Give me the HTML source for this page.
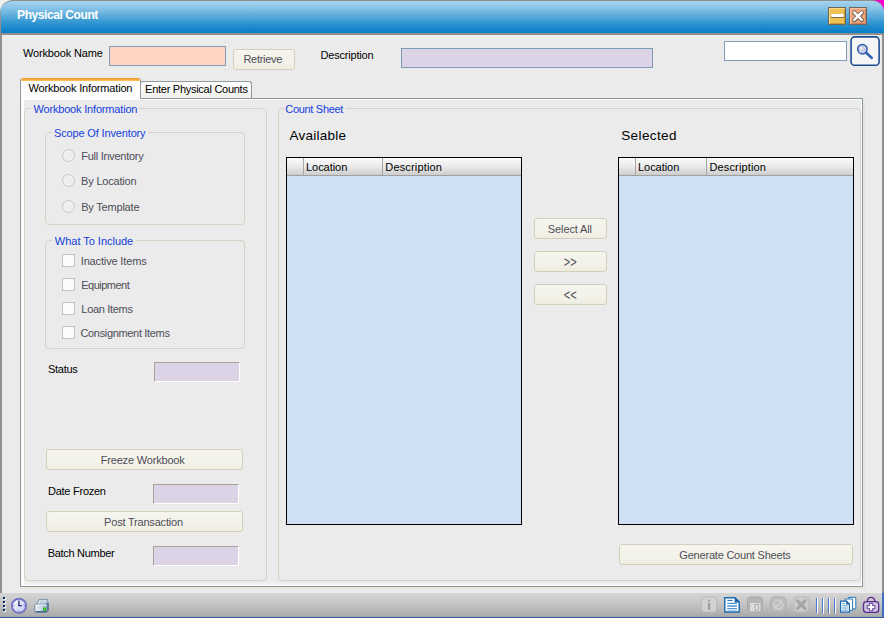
<!DOCTYPE html>
<html>
<head>
<meta charset="utf-8">
<title>Physical Count</title>
<style>
html,body{margin:0;padding:0;}
body{width:884px;height:618px;overflow:hidden;background:#ebebeb;font-family:"Liberation Sans",sans-serif;font-size:11px;color:#000;position:relative;}
.abs{position:absolute;}
#win{position:absolute;left:0;top:0;width:884px;height:618px;background:#ebebeb;overflow:hidden;}
#cornerL{position:absolute;left:0;top:0;width:16px;height:16px;background:#efefef;}
#cornerR{position:absolute;right:0;top:0;width:16px;height:16px;background:#ff00cc;}
#title{position:absolute;left:0;top:0;width:884px;height:33px;box-sizing:border-box;border-top:1px solid #8e8e8e;border-radius:13px 12px 0 0;background:linear-gradient(#a6d4ef 0%,#8bc5e7 20%,#5eaddb 45%,#3c9cd4 62%,#1f8bcc 80%,#067dc7 100%);}
#title span{position:absolute;left:16.6px;top:7px;color:#fff;font-weight:bold;font-size:12px;line-height:14px;white-space:nowrap;letter-spacing:-0.33px;}
#tline{position:absolute;left:0;top:33px;width:884px;height:2px;background:#8f8f8f;}
#lborder{position:absolute;left:0;top:33px;width:2px;height:561px;background:#8f8f8f;}
#lborder2{position:absolute;left:0;top:12px;width:1px;height:22px;background:linear-gradient(#8aa0b4,#8f8f8f 8px);}
#rborder{position:absolute;left:882px;top:33px;width:2px;height:561px;background:#8f8f8f;}
.lbl{position:absolute;white-space:nowrap;font-size:11px;line-height:13px;}
.blue{color:#1440dc;}
.white{color:#fff;}
.bold{font-weight:bold;}
.gray{color:#4d4d58;}
.inp{position:absolute;box-sizing:border-box;border:1px solid #7f9db9;}
.ro{position:absolute;box-sizing:border-box;background:#ddd3e6;border:1px solid;border-color:#a5a39a #fff #fff #a5a39a;}
.btn{position:absolute;box-sizing:border-box;border:1px solid #d2cfbd;border-radius:3px;background:linear-gradient(#f6f5ee,#f3f2e8 70%,#eeecdf);}
.grp{position:absolute;box-sizing:border-box;border:1px solid #d4d3c3;border-radius:4px;}
.gcut{position:absolute;height:3px;background:#ebebeb;}
.radio{position:absolute;width:11px;height:11px;border:1px solid #c9c6ba;border-radius:50%;background:#efefef;}
.chk{position:absolute;width:11px;height:11px;border:1px solid #c6c3b6;background:#fbfbfb;}
.grid{position:absolute;box-sizing:border-box;border:1px solid #000;background:#cfdff4;}
.ghead{position:absolute;left:0;top:0;right:0;height:17px;background:linear-gradient(#fbfbfb,#ececec 45%,#cdcdcd);border-bottom:1px solid #a0a0a0;}
.ghead i{position:absolute;top:0;width:1px;height:17px;background:#a7a7a7;}
</style>
</head>
<body>
<div id="win">
<div id="cornerL"></div><div id="cornerR"></div>
<div id="title"></div>
<div id="tline"></div>
<div id="lborder"></div><div id="lborder2"></div><div id="rborder"></div>

<!-- title buttons -->
<div class="abs" style="left:828px;top:7px;width:18px;height:18px;box-sizing:border-box;border:1px solid #6f6754;background:#f0c253;box-shadow:inset 1px 1px 0 #f8d98a,inset -1px -1px 0 #c79a36;"></div>
<div class="abs" style="left:831px;top:14px;width:13px;height:3px;background:#fff;border-radius:1.5px;box-shadow:0 1px 0 #7a6a4a;"></div>
<div class="abs" style="left:849px;top:7px;width:18px;height:18px;box-sizing:border-box;border:1px solid #6f6660;background:#eba57c;box-shadow:inset 1px 1px 0 #f5c3a4,inset -1px -1px 0 #c98259;"></div>
<svg class="abs" style="left:849px;top:7px" width="18" height="18" viewBox="0 0 18 18"><path d="M5.4 5.7 L12.8 13 M12.8 5.7 L5.4 13" stroke="#4c4038" stroke-opacity="0.85" stroke-width="4.1" stroke-linecap="round"/><path d="M5.3 5.5 L12.7 12.8 M12.7 5.5 L5.3 12.8" stroke="#fff" stroke-width="2.5" stroke-linecap="round"/></svg>

<!-- top row -->
<div class="inp" style="left:109px;top:46px;width:117px;height:20px;background:#ffd4c3;"></div>
<div class="btn" style="left:233px;top:49px;width:62px;height:21px;"></div>
<div class="inp" style="left:401px;top:48px;width:252px;height:20px;background:#ddd3e6;"></div>
<div class="inp" style="left:724px;top:41px;width:123px;height:20px;background:#fff;"></div>
<svg class="abs" style="left:850px;top:36px" width="30" height="30" viewBox="0 0 30 30"><rect x="1.1" y="0.9" width="28" height="28.4" rx="3.6" fill="#f6f6f6" stroke="#1d4e8f" stroke-width="1.6"/><circle cx="12.4" cy="13.2" r="4.7" fill="#c4cdec" stroke="#2a5ca6" stroke-width="1.5"/><circle cx="11.3" cy="12.4" r="1.3" fill="#fff"/><path d="M16.2 16.8 L21.6 21.8" stroke="#3463ac" stroke-width="2.7" stroke-linecap="round"/></svg>

<!-- tabs -->
<div class="abs" style="left:863px;top:100px;width:2px;height:489px;background:#e7e5d9;"></div>
<div class="abs" style="left:22px;top:587px;width:843px;height:2px;background:#e7e5d9;"></div>
<div class="abs" style="left:20px;top:98px;width:843px;height:489px;box-sizing:border-box;border:1px solid #8a979e;background:#fdfdfd;"></div>
<div class="abs" style="left:24px;top:100px;width:837px;height:485px;background:linear-gradient(#ebebeb 0,#ebebeb 482px,#f3f3f3 484px,#f3f3f3 100%);"></div>
<div class="abs" style="left:140px;top:81px;width:112px;height:17px;box-sizing:border-box;border:1px solid #919b9c;border-bottom:none;border-radius:3px 3px 0 0;background:linear-gradient(#fefefe,#f6f6f4 60%,#eeeeea);"></div>
<div class="abs" style="left:20px;top:78px;width:121px;height:21px;box-sizing:border-box;border:1px solid #919b9c;border-bottom:none;border-top:none;border-radius:3px 3px 0 0;background:#fdfdfd;overflow:hidden;"><div style="height:3px;background:linear-gradient(#f0941c,#fbc761);"></div></div>

<!-- left group -->
<div class="grp" style="left:24px;top:108px;width:243px;height:473px;"></div>
<div class="gcut" style="left:31px;top:107px;width:108px;"></div>
<div class="grp" style="left:45px;top:132px;width:200px;height:93px;"></div>
<div class="gcut" style="left:52px;top:131px;width:96px;"></div>
<div class="radio" style="left:62px;top:149px;"></div>
<div class="radio" style="left:62px;top:174px;"></div>
<div class="radio" style="left:62px;top:200px;"></div>

<div class="grp" style="left:45px;top:240px;width:200px;height:109px;"></div>
<div class="gcut" style="left:52px;top:239px;width:84px;"></div>
<div class="chk" style="left:62px;top:254px;"></div>
<div class="chk" style="left:62px;top:278px;"></div>
<div class="chk" style="left:62px;top:302px;"></div>
<div class="chk" style="left:62px;top:326px;"></div>

<div class="ro" style="left:154px;top:362px;width:86px;height:20px;"></div>
<div class="btn" style="left:46px;top:449px;width:197px;height:21px;"></div>
<div class="ro" style="left:153px;top:484px;width:86px;height:20px;"></div>
<div class="btn" style="left:46px;top:511px;width:197px;height:21px;"></div>
<div class="ro" style="left:153px;top:546px;width:86px;height:20px;"></div>

<!-- count sheet group -->
<div class="grp" style="left:278px;top:108px;width:583px;height:473px;"></div>
<div class="gcut" style="left:284px;top:107px;width:62px;"></div>

<div class="grid" style="left:286px;top:157px;width:236px;height:368px;">
 <div class="ghead"><i style="left:16px"></i><i style="left:95px"></i></div>
</div>
<div class="grid" style="left:618px;top:157px;width:236px;height:368px;">
 <div class="ghead"><i style="left:16px"></i><i style="left:87px"></i></div>
</div>

<div class="btn" style="left:534px;top:218px;width:73px;height:21px;"></div>
<div class="btn" style="left:534px;top:251px;width:73px;height:21px;"></div>
<div class="btn" style="left:534px;top:284px;width:73px;height:21px;"></div>
<div class="btn" style="left:619px;top:544px;width:234px;height:21px;"></div>

<div class="lbl bold white" style="left:17.10px;top:8px;letter-spacing:-0.42px;font-size:12px;line-height:14px;">Physical Count</div>
<div class="lbl" style="left:22.95px;top:47px;letter-spacing:-0.14px;">Workbook Name</div>
<div class="lbl" style="left:320.60px;top:49px;letter-spacing:-0.20px;">Description</div>
<div class="lbl" style="left:145.10px;top:83px;letter-spacing:-0.27px;">Enter Physical Counts</div>
<div class="lbl" style="left:28.49px;top:82px;letter-spacing:-0.18px;">Workbook Information</div>
<div class="lbl blue" style="left:33.49px;top:103px;letter-spacing:-0.18px;">Workbook Information</div>
<div class="lbl blue" style="left:54.00px;top:127px;letter-spacing:-0.15px;">Scope Of Inventory</div>
<div class="lbl blue" style="left:54.84px;top:235px;letter-spacing:-0.02px;">What To Include</div>
<div class="lbl blue" style="left:285.27px;top:103px;letter-spacing:-0.30px;">Count Sheet</div>
<div class="lbl gray" style="left:81.27px;top:150px;letter-spacing:-0.28px;">Full Inventory</div>
<div class="lbl gray" style="left:81.10px;top:175px;letter-spacing:-0.20px;">By Location</div>
<div class="lbl gray" style="left:81.20px;top:201px;letter-spacing:-0.20px;">By Template</div>
<div class="lbl gray" style="left:80.75px;top:255px;letter-spacing:-0.15px;">Inactive Items</div>
<div class="lbl gray" style="left:81.27px;top:279px;letter-spacing:-0.51px;">Equipment</div>
<div class="lbl gray" style="left:81.37px;top:303px;letter-spacing:-0.32px;">Loan Items</div>
<div class="lbl gray" style="left:80.45px;top:327px;letter-spacing:-0.33px;">Consignment Items</div>
<div class="lbl" style="left:48.03px;top:363px;letter-spacing:-0.27px;">Status</div>
<div class="lbl" style="left:47.96px;top:485px;letter-spacing:-0.25px;">Date Frozen</div>
<div class="lbl" style="left:47.68px;top:547px;letter-spacing:-0.30px;">Batch Number</div>
<div class="lbl gray" style="left:100.68px;top:454px;letter-spacing:-0.18px;">Freeze Workbook</div>
<div class="lbl gray" style="left:104.10px;top:516px;letter-spacing:-0.20px;">Post Transaction</div>
<div class="lbl gray" style="left:243.45px;top:53px;letter-spacing:-0.30px;">Retrieve</div>
<div class="lbl gray" style="left:547.85px;top:223px;letter-spacing:-0.12px;">Select All</div>
<div class="lbl gray" style="left:563.85px;top:256px;letter-spacing:0.00px;transform:scaleY(1.4);transform-origin:50% 6.5px;">&gt;&gt;</div>
<div class="lbl gray" style="left:563.85px;top:289px;letter-spacing:0.00px;transform:scaleY(1.4);transform-origin:50% 6.5px;">&lt;&lt;</div>
<div class="lbl gray" style="left:679.37px;top:549px;letter-spacing:-0.21px;">Generate Count Sheets</div>
<div class="lbl" style="left:306.03px;top:161px;letter-spacing:-0.05px;">Location</div>
<div class="lbl" style="left:385.35px;top:161px;letter-spacing:0.15px;">Description</div>
<div class="lbl" style="left:638.03px;top:161px;letter-spacing:-0.05px;">Location</div>
<div class="lbl" style="left:709.45px;top:161px;letter-spacing:0.15px;">Description</div>
<div class="lbl" style="left:289.55px;top:128px;letter-spacing:0.24px;font-size:13.5px;line-height:16px;">Available</div>
<div class="lbl" style="left:621.20px;top:128px;letter-spacing:0.40px;font-size:13.5px;line-height:16px;">Selected</div>

<!-- status bar -->
<div class="abs" id="sbar" style="left:0;top:593px;width:884px;height:25px;box-sizing:border-box;border-bottom:1px solid #3a5c9e;border-right:2px solid #3f6fc4;background:linear-gradient(#d5d5d5,#c5c5c5 45%,#ababab 96%,#9a9fab 100%);"></div>
<svg class="abs" style="left:0;top:593px" width="884" height="25" viewBox="0 593 884 25">
<defs>
<linearGradient id="gclk" x1="0" y1="0" x2="1" y2="1"><stop offset="0" stop-color="#ffffff"/><stop offset="1" stop-color="#bcc4ee"/></linearGradient>
<linearGradient id="gprn" x1="0" y1="0" x2="1" y2="0"><stop offset="0" stop-color="#f4f8fc"/><stop offset="1" stop-color="#9db4cc"/></linearGradient>
</defs>
<!-- grip -->
<g fill="#ffffff"><rect x="4" y="598" width="2" height="2"/><rect x="4" y="602" width="2" height="2"/><rect x="4" y="606" width="2" height="2"/><rect x="4" y="610" width="2" height="2"/></g>
<g fill="#0a246a"><rect x="3" y="597" width="2" height="2"/><rect x="3" y="601" width="2" height="2"/><rect x="3" y="605" width="2" height="2"/><rect x="3" y="609" width="2" height="2"/></g>
<!-- clock -->
<circle cx="19" cy="605.8" r="7.1" fill="url(#gclk)" stroke="#7572c6" stroke-width="1.9"/>
<path d="M18.9 600.6 V605.6 H21.8" fill="none" stroke="#2b2877" stroke-width="1.3"/>
<g fill="#6d6ac0"><rect x="18.5" y="610.4" width="1" height="1.2"/><rect x="13.2" y="605.2" width="1.2" height="1"/><rect x="23.8" y="605.2" width="1.2" height="1"/></g>
<!-- printer -->
<path d="M39 599.6 H47.6 L46 604.4 H36.6 Z" fill="#e8edf4" stroke="#6f88a6" stroke-width="0.9"/>
<path d="M40.2 601.1 H45.8 M39.6 602.7 H45.2" stroke="#a9b8cc" stroke-width="0.8"/>
<path d="M46.4 603.6 L48.8 602.4 V610.6 L46.6 612.6 Z" fill="#4f7194"/>
<rect x="34.8" y="604.2" width="12.4" height="8.2" rx="1" fill="url(#gprn)" stroke="#5f7f9f" stroke-width="0.9"/>
<path d="M35.4 605 H46.6" stroke="#ffffff" stroke-width="0.9"/>
<path d="M35.6 611.6 H46.8" stroke="#476789" stroke-width="1.2"/>
<rect x="43" y="607.6" width="3.2" height="3.2" fill="#18b418"/><rect x="44" y="608.4" width="1.2" height="1.2" fill="#7cf060"/>
<!-- i -->
<rect x="701.5" y="597" width="15" height="15" rx="3.2" fill="#d2d2d2" stroke="#b9b9b9" stroke-width="1"/>
<rect x="708" y="599.6" width="2.2" height="2" rx="0.8" fill="#9b9b9b"/><rect x="708" y="602.8" width="2.2" height="7" fill="#9b9b9b"/>
<!-- doc -->
<path d="M724.8 597.8 H735 L739.2 602 V612 H724.8 Z" fill="#ffffff" stroke="#1b69b0" stroke-width="1.4"/>
<path d="M734.6 597.4 L739.8 602.6 H734.6 Z" fill="#1b5fa6"/>
<path d="M727.4 600.4 H732.6" stroke="#2a78be" stroke-width="1.2"/>
<path d="M727.2 603.4 H737 M727.2 606 H737 M727.2 608.6 H737" stroke="#4f97d2" stroke-width="1.3"/>
<path d="M727.2 610.6 H737" stroke="#8dbde6" stroke-width="0.8"/>
<!-- icon3 -->
<rect x="747.5" y="597" width="15" height="15" rx="3.4" fill="#b5b5b5" stroke="#a8a8a8" stroke-width="1"/>
<path d="M750 603 H760.4 V611.4 H750 Z" fill="#dadada"/>
<rect x="755.2" y="604.4" width="3" height="5.8" fill="#e8e8e8" stroke="#a2a2a2" stroke-width="0.9"/>
<!-- icon4 -->
<rect x="770.8" y="597" width="15" height="15" rx="3.4" fill="#bdbdbd" stroke="#acacac" stroke-width="1"/>
<circle cx="778.3" cy="604.6" r="4.4" fill="none" stroke="#d0d0d0" stroke-width="1.7"/>
<path d="M775.4 607.6 L781.2 601.6" stroke="#d0d0d0" stroke-width="1.7"/>
<!-- icon5 X -->
<rect x="793.8" y="597" width="15" height="15" rx="3.4" fill="#cdcdcd" stroke="#b7b7b7" stroke-width="1"/>
<path d="M797.4 600.6 L805.2 608.6 M805.2 600.6 L797.4 608.6" stroke="#a6a6a6" stroke-width="3" stroke-linecap="round"/>
<!-- separators -->
<g fill="#4a7ad2"><rect x="816" y="598" width="1" height="15"/><rect x="822" y="598" width="1" height="15"/><rect x="828" y="598" width="1" height="15"/><rect x="834" y="598" width="1" height="15"/></g>
<g fill="#ffffff"><rect x="817" y="598" width="1" height="15.6"/><rect x="823" y="598" width="1" height="15.6"/><rect x="829" y="598" width="1" height="15.6"/><rect x="835" y="598" width="1" height="15.6"/></g>
<!-- copy docs -->
<path d="M848.4 597.4 H855.8 V608.8 H848.4 Z" fill="#ffffff" stroke="#2a7ab8" stroke-width="1"/>
<path d="M845.2 599 H852.6 V610.4 H845.2 Z" fill="#ffffff" stroke="#2a7ab8" stroke-width="1"/>
<path d="M840.6 601.2 H846.6 L849.4 604 V612.2 H840.6 Z" fill="#ffffff" stroke="#1b69b0" stroke-width="1.2"/>
<path d="M846.2 600.8 L849.8 604.4 H846.2 Z" fill="#1b5fa6"/>
<path d="M842.2 603.6 H845.2 M842.2 605.8 H847.8 M842.2 608 H847.8 M842.2 610.2 H847.8" stroke="#4f97d2" stroke-width="1"/>
<!-- med kit -->
<path d="M867.4 601.8 C867.4 596 874.8 596 874.8 601.8" fill="none" stroke="#5b2c93" stroke-width="1.3"/>
<rect x="863.5" y="601.7" width="15.2" height="10.7" rx="2.8" fill="#cdc7da" stroke="#5b2c93" stroke-width="1.3"/>
<path d="M869.6 603.4 H872.6 V605.6 H874.9 V608.6 H872.6 V610.9 H869.6 V608.6 H867.3 V605.6 H869.6 Z" fill="#ffffff" stroke="#5b2c93" stroke-width="0.9"/>
</svg>

</div>
</body>
</html>
